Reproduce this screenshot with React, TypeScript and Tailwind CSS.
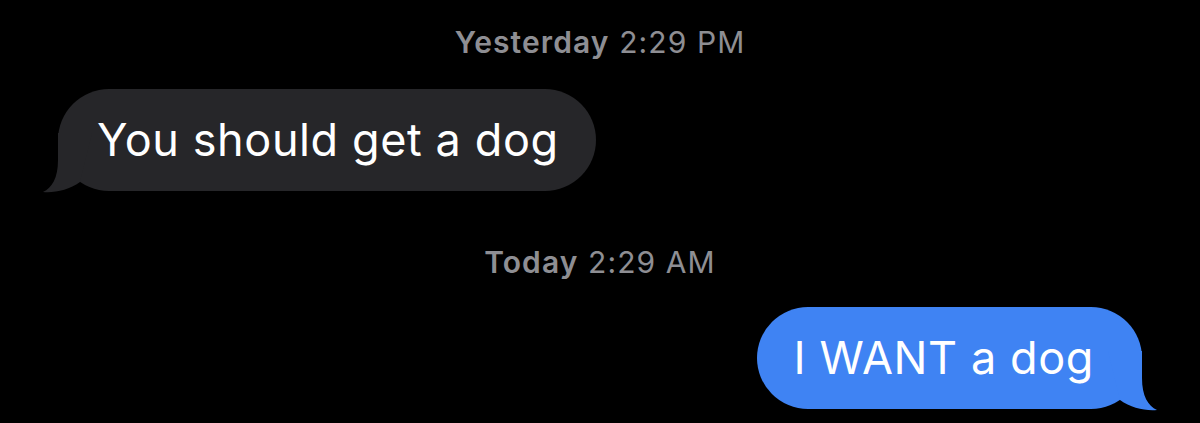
const Tail = ({ fill, flip }: { fill: string; flip?: boolean }) => (
  <svg
    className={
      flip
        ? "absolute -right-[16px] -bottom-[2px] w-[50px] h-[60px] -scale-x-100"
        : "absolute -left-[16px] -bottom-[2px] w-[50px] h-[60px]"
    }
    viewBox="0 0 50 60"
  >
    <path d="M16 7 L16 27 C16 45 10 55 1 59 C13 60 27 57 38 49 L50 0 L16 0 Z" fill={fill} />
  </svg>
);

const Stamp = ({ day, time }: { day: string; time: string }) => (
  <p className="text-center text-[30px] leading-[32px] tracking-[1.1px] text-[#8e8e93]">
    <span className="font-semibold">{day}</span> {time}
  </p>
);

export default function App() {
  return (
    <div
      className="w-[1200px] h-[423px] bg-black px-[58px] pt-[26px] flex flex-col overflow-hidden"
      style={{ fontFamily: "Inter, 'Noto Sans', sans-serif" }}
    >
      <Stamp day="Yesterday" time="2:29 PM" />
      <div className="flex justify-start mt-[31px]">
        <div className="relative bg-[#262629] rounded-full pl-[39px] pr-[37px] py-[24px]">
          <Tail fill="#262629" />
          <p className="relative text-white text-[45px] leading-[54px] tracking-[0.6px]">You should get a dog</p>
        </div>
      </div>
      <div className="mt-[55px]">
        <Stamp day="Today" time="2:29 AM" />
      </div>
      <div className="flex justify-end mt-[29px]">
        <div className="relative bg-[#3f83f3] rounded-full pl-[37px] pr-[48px] py-[24px]">
          <Tail fill="#3f83f3" flip />
          <p className="relative text-white text-[45px] leading-[54px] tracking-[0.6px]">I WANT a dog</p>
        </div>
      </div>
    </div>
  );
}
